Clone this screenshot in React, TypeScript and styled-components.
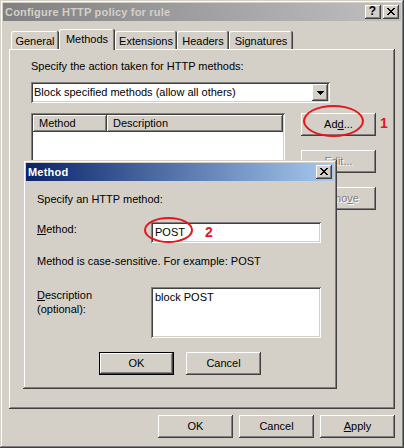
import styled, { createGlobalStyle, css } from 'styled-components'

const face = '#d4d0c8'
const shadow = '#808080'
const dark = '#404040'
const ink = '#e8141b'

const GlobalStyle = createGlobalStyle`
	html, body {
		margin: 0;
		padding: 0;
		background: ${face};
	}
	body {
		font-family: 'Liberation Sans', Arial, sans-serif;
		font-size: 11px;
		line-height: 13px;
		color: #000;
	}
	* {
		box-sizing: border-box;
	}
`

const raised = css`
	box-shadow: inset -1px -1px ${dark}, inset 1px 1px #fff, inset -2px -2px ${shadow};
`

const sunken = css`
	box-shadow: inset 1px 1px ${shadow}, inset -1px -1px #fff, inset 2px 2px ${dark}, inset -2px -2px ${face};
`

const Window = styled.div`
	position: relative;
	display: flex;
	flex-direction: column;
	width: 404px;
	height: 448px;
	padding: 3px;
	background: ${face};
	box-shadow: inset -1px -1px ${dark}, inset 1px 1px ${face}, inset -2px -2px ${shadow}, inset 2px 2px #fff;
`

const TitleBar = styled.div<{ $active?: boolean }>`
	display: flex;
	align-items: center;
	height: 18px;
	padding: 0 2px;
	background: ${(p) =>
		p.$active ? 'linear-gradient(to right, #0a246a, #a6caf0)' : 'linear-gradient(to right, #808080, #c0c0c0)'};
	color: ${(p) => (p.$active ? '#fff' : face)};
	font-weight: bold;
	letter-spacing: 0.2px;
`

const TitleText = styled.span`
	flex: 1;
	white-space: nowrap;
`

const CaptionButtons = styled.div`
	display: flex;
	gap: 2px;
`

const CaptionButton = styled.div`
	display: flex;
	align-items: center;
	justify-content: center;
	width: 16px;
	height: 14px;
	padding: 0 1px 1px 0;
	background: ${face};
	color: #000;
	font-size: 12px;
	font-weight: bold;
	letter-spacing: 0;
	${raised}
`

const Body = styled.div`
	display: flex;
	flex-direction: column;
	padding: 8px 6px 0;
`

const TabStrip = styled.div`
	position: relative;
	z-index: 1;
	display: flex;
	align-items: flex-end;
	height: 20px;
	padding-left: 2px;
`

const Tab = styled.div<{ $selected?: boolean; $width: number }>`
	display: flex;
	align-items: center;
	justify-content: center;
	width: ${(p) => p.$width}px;
	height: ${(p) => (p.$selected ? 21 : 18)}px;
	margin-bottom: ${(p) => (p.$selected ? -1 : 0)}px;
	padding-top: ${(p) => (p.$selected ? 0 : 2)}px;
	background: ${face};
	border-radius: 2px 2px 0 0;
	box-shadow: inset -1px 0 ${dark}, inset 1px 1px #fff, inset -2px 0 ${shadow};
`

const Panel = styled.div`
	display: flex;
	flex-direction: column;
	height: 360px;
	padding: 11px 0 0 22px;
	${raised}
`

const Combo = styled.div`
	display: flex;
	align-items: center;
	width: 299px;
	height: 21px;
	margin-top: 9px;
	padding: 2px 2px 2px 3px;
	background: #fff;
	${sunken}
`

const ComboText = styled.span`
	flex: 1;
	white-space: nowrap;
`

const ComboArrow = styled.div`
	display: flex;
	align-items: center;
	justify-content: center;
	width: 16px;
	height: 17px;
	background: ${face};
	${raised}
`

const ListRow = styled.div`
	display: flex;
	gap: 16px;
	margin-top: 10px;
`

const ListView = styled.div`
	width: 254px;
	height: 190px;
	padding: 2px;
	background: #fff;
	${sunken}
`

const ListHeader = styled.div`
	display: flex;
	height: 17px;
`

const HeaderCell = styled.div<{ $width?: number }>`
	display: flex;
	align-items: center;
	flex: ${(p) => (p.$width ? `0 0 ${p.$width}px` : '1')};
	padding-left: 6px;
	background: ${face};
	${raised}
`

const ButtonColumn = styled.div`
	display: flex;
	flex-direction: column;
	gap: 14px;
`

const Button = styled.button<{ $default?: boolean }>`
	display: block;
	width: 75px;
	height: 23px;
	padding: 0;
	border: ${(p) => (p.$default ? '1px solid #000' : 'none')};
	background: ${face};
	color: #000;
	font-family: inherit;
	font-size: 11px;
	line-height: 13px;
	${raised}

	&:disabled {
		color: ${shadow};
		text-shadow: 1px 1px #fff;
	}
`

const ButtonRow = styled.div`
	display: flex;
	justify-content: flex-end;
	gap: 6px;
	margin-top: 6px;
`

const Dialog = styled.div`
	position: absolute;
	left: 23px;
	top: 160px;
	z-index: 5;
	display: flex;
	flex-direction: column;
	width: 314px;
	height: 229px;
	padding: 3px;
	background: ${face};
	box-shadow: inset -1px -1px ${dark}, inset 1px 1px ${face}, inset -2px -2px ${shadow}, inset 2px 2px #fff;
`

const DialogBody = styled.div`
	display: flex;
	flex-direction: column;
	padding: 12px 11px 0;
`

const FieldRow = styled.div<{ $gap: number }>`
	display: flex;
	align-items: flex-start;
	margin-top: ${(p) => p.$gap}px;
`

const FieldLabel = styled.div<{ $lineHeight?: number }>`
	width: 114px;
	margin-top: 1px;
	line-height: ${(p) => p.$lineHeight ?? 13}px;
`

const Field = styled.div<{ $height: number }>`
	display: flex;
	align-items: ${(p) => (p.$height > 30 ? 'flex-start' : 'center')};
	width: 170px;
	height: ${(p) => p.$height}px;
	padding: 4px;
	background: #fff;
	${sunken}
`

const Note = styled.div`
	margin-top: 12px;
`

const DialogButtons = styled.div`
	display: flex;
	justify-content: center;
	gap: 12px;
	margin-top: 14px;
`

const Ring = styled.div`
	position: absolute;
	z-index: 10;
	border: 2px solid ${ink};
	border-radius: 50%;
	pointer-events: none;
`

const Marker = styled.span`
	position: absolute;
	z-index: 10;
	color: ${ink};
	font-size: 14px;
	font-weight: bold;
	line-height: 14px;
`

const CloseGlyph = () => (
	<svg width="8" height="7" viewBox="0 0 8 7" shapeRendering="crispEdges">
		<path
			fill="#000"
			d="M0 0h2v1H0zM6 0h2v1H6zM1 1h2v1H1zM5 1h2v1H5zM2 2h4v1H2zM3 3h2v1H3zM2 4h4v1H2zM1 5h2v1H1zM5 5h2v1H5zM0 6h2v1H0zM6 6h2v1H6z"
		/>
	</svg>
)

const ArrowGlyph = () => (
	<svg width="7" height="4" viewBox="0 0 7 4" shapeRendering="crispEdges">
		<path fill="#000" d="M0 0h7v1H0zM1 1h5v1H1zM2 2h3v1H2zM3 3h1v1H3z" />
	</svg>
)

const tabs = [
	{ label: 'General', width: 48 },
	{ label: 'Methods', width: 56, selected: true },
	{ label: 'Extensions', width: 62 },
	{ label: 'Headers', width: 52 },
	{ label: 'Signatures', width: 64 },
]

const App = (): JSX.Element => {
	return (
		<>
			<GlobalStyle />
			<Window>
				<TitleBar>
					<TitleText>Configure HTTP policy for rule</TitleText>
					<CaptionButtons>
						<CaptionButton>?</CaptionButton>
						<CaptionButton>
							<CloseGlyph />
						</CaptionButton>
					</CaptionButtons>
				</TitleBar>
				<Body>
					<TabStrip>
						{tabs.map(({ label, width, selected }) => (
							<Tab key={label} $width={width} $selected={selected}>
								{label}
							</Tab>
						))}
					</TabStrip>
					<Panel>
						<div>Specify the action taken for HTTP methods:</div>
						<Combo>
							<ComboText>Block specified methods (allow all others)</ComboText>
							<ComboArrow>
								<ArrowGlyph />
							</ComboArrow>
						</Combo>
						<ListRow>
							<ListView>
								<ListHeader>
									<HeaderCell $width={74}>Method</HeaderCell>
									<HeaderCell>Description</HeaderCell>
								</ListHeader>
							</ListView>
							<ButtonColumn>
								<Button>
									Ad<u>d</u>...
								</Button>
								<Button disabled>
									<u>E</u>dit...
								</Button>
								<Button disabled>
									Remo<u>v</u>e
								</Button>
							</ButtonColumn>
						</ListRow>
					</Panel>
					<ButtonRow>
						<Button>OK</Button>
						<Button>Cancel</Button>
						<Button>
							<u>A</u>pply
						</Button>
					</ButtonRow>
				</Body>

				<Dialog>
					<TitleBar $active>
						<TitleText>Method</TitleText>
						<CaptionButton>
							<CloseGlyph />
						</CaptionButton>
					</TitleBar>
					<DialogBody>
						<div>Specify an HTTP method:</div>
						<FieldRow $gap={16}>
							<FieldLabel>
								<u>M</u>ethod:
							</FieldLabel>
							<Field $height={21}>POST</Field>
						</FieldRow>
						<Note>Method is case-sensitive. For example: POST</Note>
						<FieldRow $gap={19}>
							<FieldLabel $lineHeight={14}>
								<u>D</u>escription
								<br />
								(optional):
							</FieldLabel>
							<Field $height={51}>block POST</Field>
						</FieldRow>
						<DialogButtons>
							<Button $default>OK</Button>
							<Button>Cancel</Button>
						</DialogButtons>
					</DialogBody>
				</Dialog>

				<Ring style={{ left: 303, top: 105, width: 61, height: 32 }} />
				<Marker style={{ left: 380, top: 116 }}>1</Marker>
				<Ring style={{ left: 144, top: 217, width: 49, height: 26 }} />
				<Marker style={{ left: 205, top: 225 }}>2</Marker>
			</Window>
		</>
	)
}

export default App
